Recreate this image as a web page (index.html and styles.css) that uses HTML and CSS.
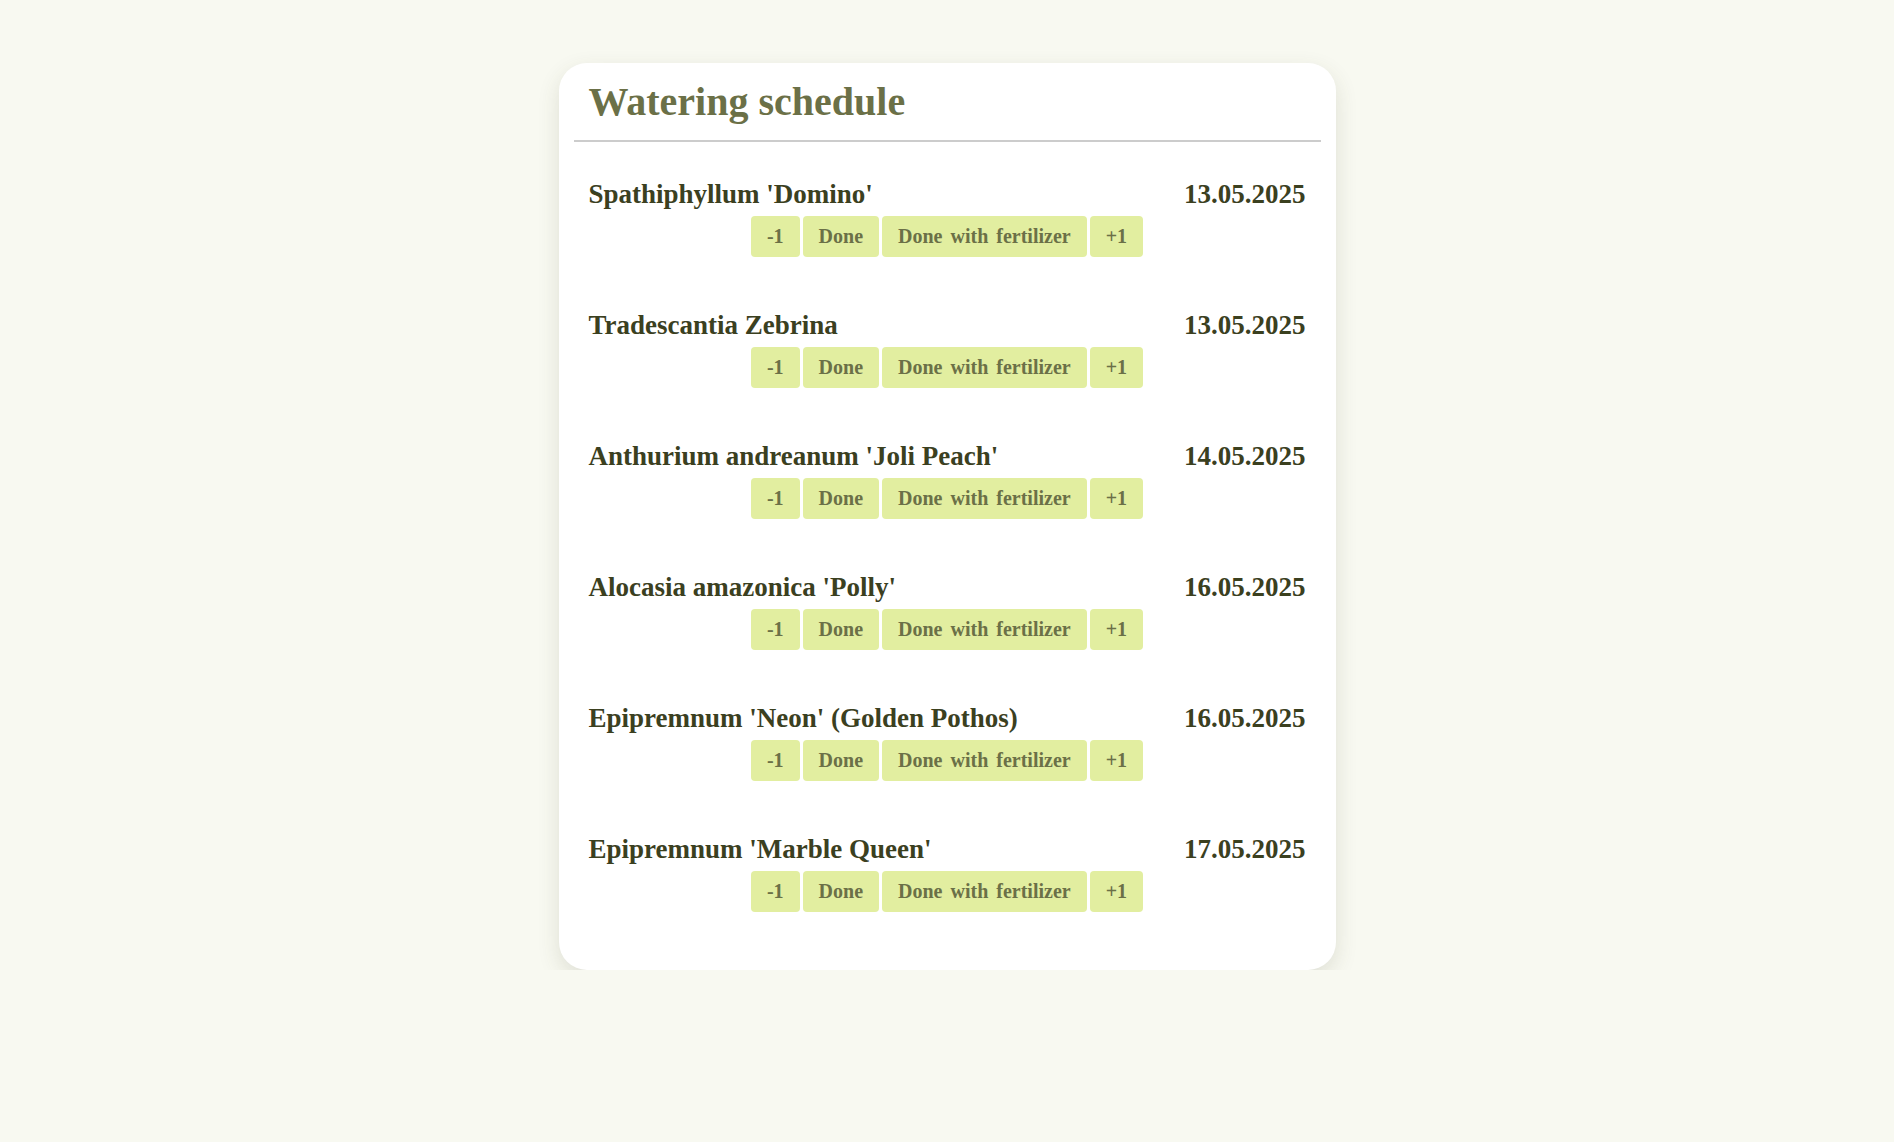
FILE: index.html
```html
<!DOCTYPE html>
<html lang="en">
<head>
<meta charset="utf-8">
<title>Watering schedule</title>
<link rel="stylesheet" href="styles.css">
</head>
<body>
<main class="card">
  <header class="card-header">
    <h1 class="title">Watering schedule</h1>
  </header>
  <ul class="plant-list">
    <li class="plant">
      <div class="plant-row"><span class="plant-name">Spathiphyllum 'Domino'</span><span class="plant-date">13.05.2025</span></div>
      <div class="actions"><button class="btn">-1</button><button class="btn">Done</button><button class="btn">Done with fertilizer</button><button class="btn">+1</button></div>
    </li>
    <li class="plant">
      <div class="plant-row"><span class="plant-name">Tradescantia Zebrina</span><span class="plant-date">13.05.2025</span></div>
      <div class="actions"><button class="btn">-1</button><button class="btn">Done</button><button class="btn">Done with fertilizer</button><button class="btn">+1</button></div>
    </li>
    <li class="plant">
      <div class="plant-row"><span class="plant-name">Anthurium andreanum 'Joli Peach'</span><span class="plant-date">14.05.2025</span></div>
      <div class="actions"><button class="btn">-1</button><button class="btn">Done</button><button class="btn">Done with fertilizer</button><button class="btn">+1</button></div>
    </li>
    <li class="plant">
      <div class="plant-row"><span class="plant-name">Alocasia amazonica 'Polly'</span><span class="plant-date">16.05.2025</span></div>
      <div class="actions"><button class="btn">-1</button><button class="btn">Done</button><button class="btn">Done with fertilizer</button><button class="btn">+1</button></div>
    </li>
    <li class="plant">
      <div class="plant-row"><span class="plant-name">Epipremnum 'Neon' (Golden Pothos)</span><span class="plant-date">16.05.2025</span></div>
      <div class="actions"><button class="btn">-1</button><button class="btn">Done</button><button class="btn">Done with fertilizer</button><button class="btn">+1</button></div>
    </li>
    <li class="plant">
      <div class="plant-row"><span class="plant-name">Epipremnum 'Marble Queen'</span><span class="plant-date">17.05.2025</span></div>
      <div class="actions"><button class="btn">-1</button><button class="btn">Done</button><button class="btn">Done with fertilizer</button><button class="btn">+1</button></div>
    </li>
    <li class="plant">
      <div class="plant-row"><span class="plant-name">Monstera deliciosa</span><span class="plant-date">17.05.2025</span></div>
      <div class="actions"><button class="btn">-1</button><button class="btn">Done</button><button class="btn">Done with fertilizer</button><button class="btn">+1</button></div>
    </li>
  </ul>
</main>
</body>
</html>
```

FILE: styles.css
```css
html, body {
  margin: 0;
  padding: 0;
}

body {
  background: #f8f9f1;
  font-family: "Liberation Serif", "Times New Roman", serif;
  padding-top: 63px;
}

.card {
  width: 777px;
  height: 907px;
  margin: 0 auto;
  box-sizing: border-box;
  padding: 0 15px;
  background: #ffffff;
  border-radius: 28px;
  box-shadow: 0 8px 22px rgba(70, 72, 40, 0.14);
  overflow: hidden;
}

.card-header {
  padding: 15px;
  border-bottom: 2px solid #cccccc;
}

.title {
  margin: 0;
  font-size: 40px;
  font-weight: bold;
  line-height: normal;
  color: #6b7047;
}

.plant-list {
  list-style: none;
  margin: 0;
  padding: 15px 0 0;
}

.plant {
  padding: 22px 15px 31px;
}

.plant-row {
  display: flex;
  justify-content: space-between;
  align-items: baseline;
  font-size: 27px;
  font-weight: bold;
  line-height: normal;
  color: #3b401f;
}

.actions {
  display: flex;
  justify-content: center;
  gap: 3px;
  margin-top: 6px;
}

.btn {
  font-family: "Liberation Serif", "Times New Roman", serif;
  font-size: 20px;
  font-weight: bold;
  line-height: 23px;
  word-spacing: 3px;
  color: #6b7047;
  background: #e2eea0;
  border: none;
  border-radius: 4px;
  padding: 9px 16px;
  margin: 0;
}
```
